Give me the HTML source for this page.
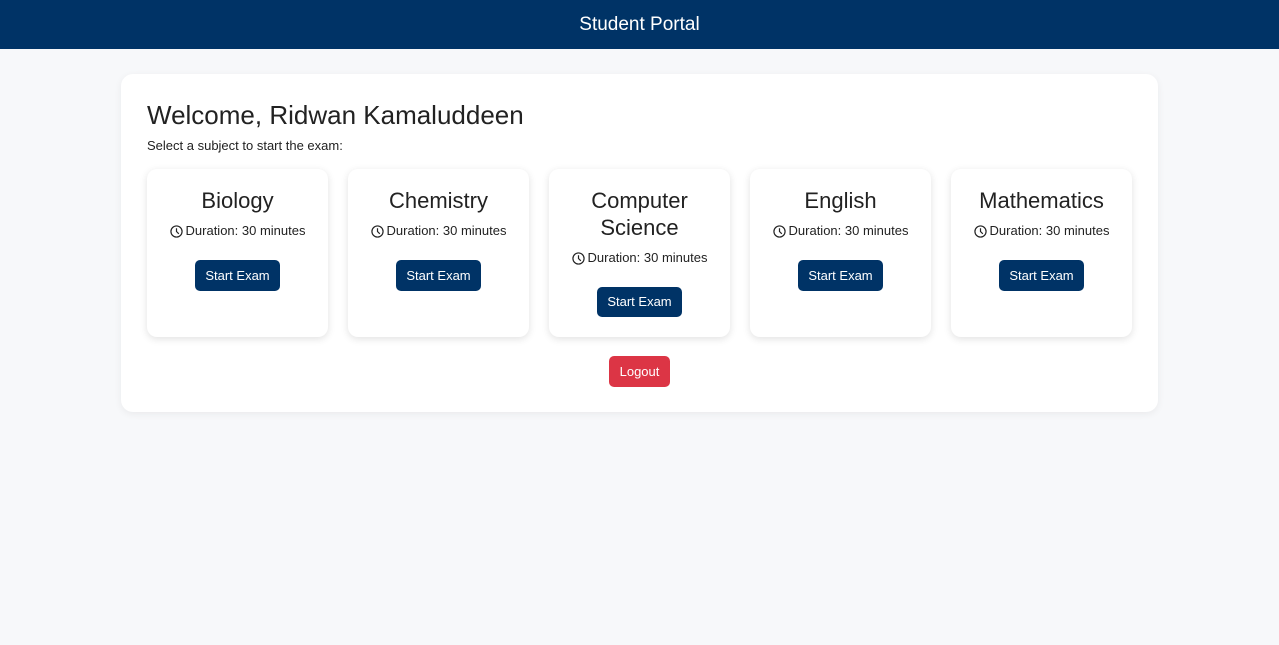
<!DOCTYPE html>
<html><head><style>
*{box-sizing:border-box}
body{margin:0;background:#f7f8fa;font-family:"Liberation Sans",Arial,sans-serif;color:#222;}
.hdr{height:49px;background:#003366;color:#fff;font-size:19px;text-align:center;line-height:49px}
.box{position:absolute;left:121px;top:74px;width:1037px;height:338px;background:#fff;border-radius:12px;box-shadow:0 2px 8px rgba(0,0,0,.06);padding:0 26px}
h1{font-weight:normal;font-size:26px;margin:0;position:absolute;top:26px;left:26px;line-height:30px}
.sub{position:absolute;left:26px;top:64px;font-size:13px;line-height:16px}
.cards{position:absolute;top:95px;left:26px;display:flex;gap:20px;align-items:stretch}
.card{width:181px;height:168px;background:#fff;border-radius:10px;box-shadow:0 2px 8px rgba(0,0,0,.12);text-align:center;padding-top:18px}
.t{font-size:22px;line-height:27px}
.d{font-size:13px;line-height:18px;margin-top:8px;display:flex;align-items:center;justify-content:center;gap:3px}
.btn{display:inline-block;background:#003366;color:#fff;font-size:13px;height:31px;line-height:31px;width:85px;border-radius:5px;margin-top:20px}
.lo{position:absolute;left:488px;top:282px;width:61px;height:31px;line-height:31px;text-align:center;background:#dc3545;color:#fff;font-size:13px;border-radius:5px}
</style></head><body>
<div class="hdr">Student Portal</div>
<div class="box">
<h1>Welcome, Ridwan Kamaluddeen</h1>
<div class="sub">Select a subject to start the exam:</div>
<div class="cards">
<div class="card"><div class="t">Biology</div><div class="d"><svg width="13" height="13" viewBox="0 0 14 14"><circle cx="7" cy="7" r="6" fill="none" stroke="#222" stroke-width="1.3"/><path d="M7 3.5V7l2.5 2.5" fill="none" stroke="#222" stroke-width="1.3"/></svg>Duration: 30 minutes</div><span class="btn">Start Exam</span></div>
<div class="card"><div class="t">Chemistry</div><div class="d"><svg width="13" height="13" viewBox="0 0 14 14"><circle cx="7" cy="7" r="6" fill="none" stroke="#222" stroke-width="1.3"/><path d="M7 3.5V7l2.5 2.5" fill="none" stroke="#222" stroke-width="1.3"/></svg>Duration: 30 minutes</div><span class="btn">Start Exam</span></div>
<div class="card"><div class="t">Computer<br>Science</div><div class="d"><svg width="13" height="13" viewBox="0 0 14 14"><circle cx="7" cy="7" r="6" fill="none" stroke="#222" stroke-width="1.3"/><path d="M7 3.5V7l2.5 2.5" fill="none" stroke="#222" stroke-width="1.3"/></svg>Duration: 30 minutes</div><span class="btn" style="height:30px;line-height:30px">Start Exam</span></div>
<div class="card"><div class="t">English</div><div class="d"><svg width="13" height="13" viewBox="0 0 14 14"><circle cx="7" cy="7" r="6" fill="none" stroke="#222" stroke-width="1.3"/><path d="M7 3.5V7l2.5 2.5" fill="none" stroke="#222" stroke-width="1.3"/></svg>Duration: 30 minutes</div><span class="btn">Start Exam</span></div>
<div class="card"><div class="t">Mathematics</div><div class="d"><svg width="13" height="13" viewBox="0 0 14 14"><circle cx="7" cy="7" r="6" fill="none" stroke="#222" stroke-width="1.3"/><path d="M7 3.5V7l2.5 2.5" fill="none" stroke="#222" stroke-width="1.3"/></svg>Duration: 30 minutes</div><span class="btn">Start Exam</span></div>
</div>
<div class="lo">Logout</div>
</div>
</body></html>
